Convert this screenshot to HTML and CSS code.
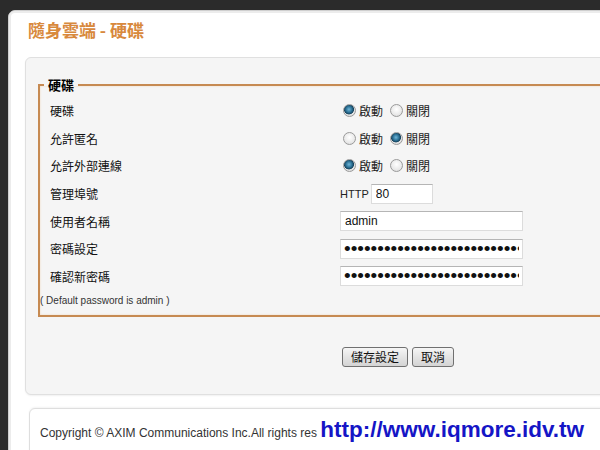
FILE: index.html
```html
<!DOCTYPE html>
<html lang="zh-Hant">
<head>
    <meta charset="UTF-8">
    <title>隨身雲端 - 硬碟</title>
    <link rel="stylesheet" href="styles.css">
</head>
<body>
    <div class="page">
        <h1 class="title">隨身雲端 - 硬碟</h1>
        <div class="content">
            <form>
                <fieldset class="disk">
                    <legend>硬碟</legend>
                    <div class="row">
                        <span class="name">硬碟</span>
                        <span class="field">
                            <label><input type="radio" name="disk" checked>啟動</label>
                            <label><input type="radio" name="disk">關閉</label>
                        </span>
                    </div>
                    <div class="row">
                        <span class="name">允許匿名</span>
                        <span class="field">
                            <label><input type="radio" name="anon">啟動</label>
                            <label><input type="radio" name="anon" checked>關閉</label>
                        </span>
                    </div>
                    <div class="row">
                        <span class="name">允許外部連線</span>
                        <span class="field">
                            <label><input type="radio" name="ext" checked>啟動</label>
                            <label><input type="radio" name="ext">關閉</label>
                        </span>
                    </div>
                    <div class="row">
                        <span class="name">管理埠號</span>
                        <span class="field">
                            <span class="proto">HTTP</span>
                            <input type="text" class="port" value="80">
                        </span>
                    </div>
                    <div class="row">
                        <span class="name">使用者名稱</span>
                        <span class="field"><input type="text" class="text" value="admin"></span>
                    </div>
                    <div class="row">
                        <span class="name">密碼設定</span>
                        <span class="field"><input type="password" class="text" value="adminadminadminadminadminadminadmin"></span>
                    </div>
                    <div class="row">
                        <span class="name">確認新密碼</span>
                        <span class="field"><input type="password" class="text" value="adminadminadminadminadminadminadmin"></span>
                    </div>
                    <p class="note">( Default password is admin )</p>
                </fieldset>
                <div class="actions">
                    <button type="submit">儲存設定</button>
                    <button type="reset">取消</button>
                </div>
            </form>
        </div>
        <div class="footer">
            Copyright © AXIM Communications Inc.All rights res <a class="site" href="#">http://www.iqmore.idv.tw</a>
        </div>
    </div>
</body>
</html>
```

FILE: styles.css
```css
body {
    margin: 0;
    padding: 10px 0 0 8px;
    background: #2b2b2b;
    font-family: "Liberation Sans", Arial, "Noto Sans CJK TC", sans-serif;
    font-size: 12px;
    color: #222;
    overflow: hidden;
}
.page {
    width: 700px;
    background: #fff;
    border: 1px solid #cfcfcf;
    border-radius: 7px 0 0 0;
    box-shadow: inset 0 0 0 2px #ececec;
    padding: 0 0 20px 16px;
}
.title {
    margin: 0;
    padding: 9px 0 0 3px;
    height: 38px;
    box-sizing: border-box;
    font-family: "Noto Sans CJK TC", sans-serif;
    font-size: 17px;
    line-height: 20px;
    font-weight: bold;
    color: #d8893d;
}
.content {
    margin-top: 8px;
    background: #f5f5f5;
    border: 1px solid #e0e0e0;
    border-radius: 6px 0 0 6px;
    box-shadow: 0 1px 2px rgba(0, 0, 0, 0.06);
    padding: 18px 0 27px 12px;
}
.content form {
    margin: 0;
}
.disk {
    margin: 0;
    padding: 3px 0 6px 10px;
    border: 2px solid #c68a52;
    box-shadow: inset 0 0 2px rgba(230, 160, 90, 0.4);
}
.disk legend {
    margin-left: -6px;
    padding: 0 4px;
    font-family: "Noto Sans CJK TC", sans-serif;
    font-size: 13px;
    font-weight: bold;
    line-height: 18px;
    color: #000;
}
.row {
    display: grid;
    grid-template-columns: 290px auto;
    align-items: center;
    height: 27.6px;
}
.name {
    font-family: "Noto Sans CJK TC", sans-serif;
    font-size: 12px;
    color: #111;
}
.field {
    display: flex;
    align-items: center;
}
.field label {
    display: flex;
    align-items: center;
    margin-right: 4px;
    font-family: "Noto Sans CJK TC", sans-serif;
    font-size: 12px;
    color: #222;
}
.field input[type="radio"] {
    appearance: none;
    -webkit-appearance: none;
    width: 13px;
    height: 13px;
    margin: 0 3px 0 3px;
    border: 1px solid #9a9a9a;
    border-radius: 50%;
    background: radial-gradient(circle at 50% 40%, #ffffff 0%, #e9e9e9 60%, #d6d6d6 100%);
    box-sizing: border-box;
}
.field input[type="radio"]:checked {
    background: radial-gradient(circle at 45% 40%, #6fb6d8 0%, #2a6f93 35%, #18445e 52%, #e6e6e6 60%, #d4d4d4 100%);
}
.proto {
    font-size: 11px;
    margin-right: 2px;
    color: #222;
}
input.port,
input.text {
    height: 20px;
    box-sizing: border-box;
    padding: 0 4px;
    border: 1px solid #dcdcdc;
    border-top-color: #b5b5b5;
    background: #fff;
    font-family: "Liberation Sans", Arial, sans-serif;
    font-size: 12px;
    color: #111;
    outline: none;
}
input.port {
    width: 62px;
}
input.text {
    width: 183px;
}
input[type="password"] {
    font-size: 19px;
    line-height: 18px;
    padding: 0 3px;
}
.note {
    margin: 3px 0 0 -10px;
    font-size: 10px;
    line-height: 16px;
    color: #333;
}
.actions {
    display: flex;
    gap: 4px;
    margin: 30px 0 0 304px;
}
.actions button {
    height: 20px;
    padding: 0 8px;
    border: 1px solid #707070;
    border-radius: 3px;
    background: linear-gradient(#f6f6f6, #e4e4e4 50%, #d4d4d4);
    font-family: "Noto Sans CJK TC", sans-serif;
    font-size: 12px;
    line-height: 18px;
    color: #111;
    cursor: pointer;
}
.footer {
    margin: 13px 0 0 4px;
    background: #fff;
    border: 1px solid #dedede;
    border-radius: 6px 0 0 0;
    box-shadow: 0 -1px 2px rgba(0, 0, 0, 0.05);
    padding: 10px 0 20px 10px;
    line-height: 22px;
    font-size: 12px;
    color: #333;
}
.site {
    font-size: 22.5px;
    font-weight: bold;
    color: #1515c6;
    text-decoration: none;
}
```
